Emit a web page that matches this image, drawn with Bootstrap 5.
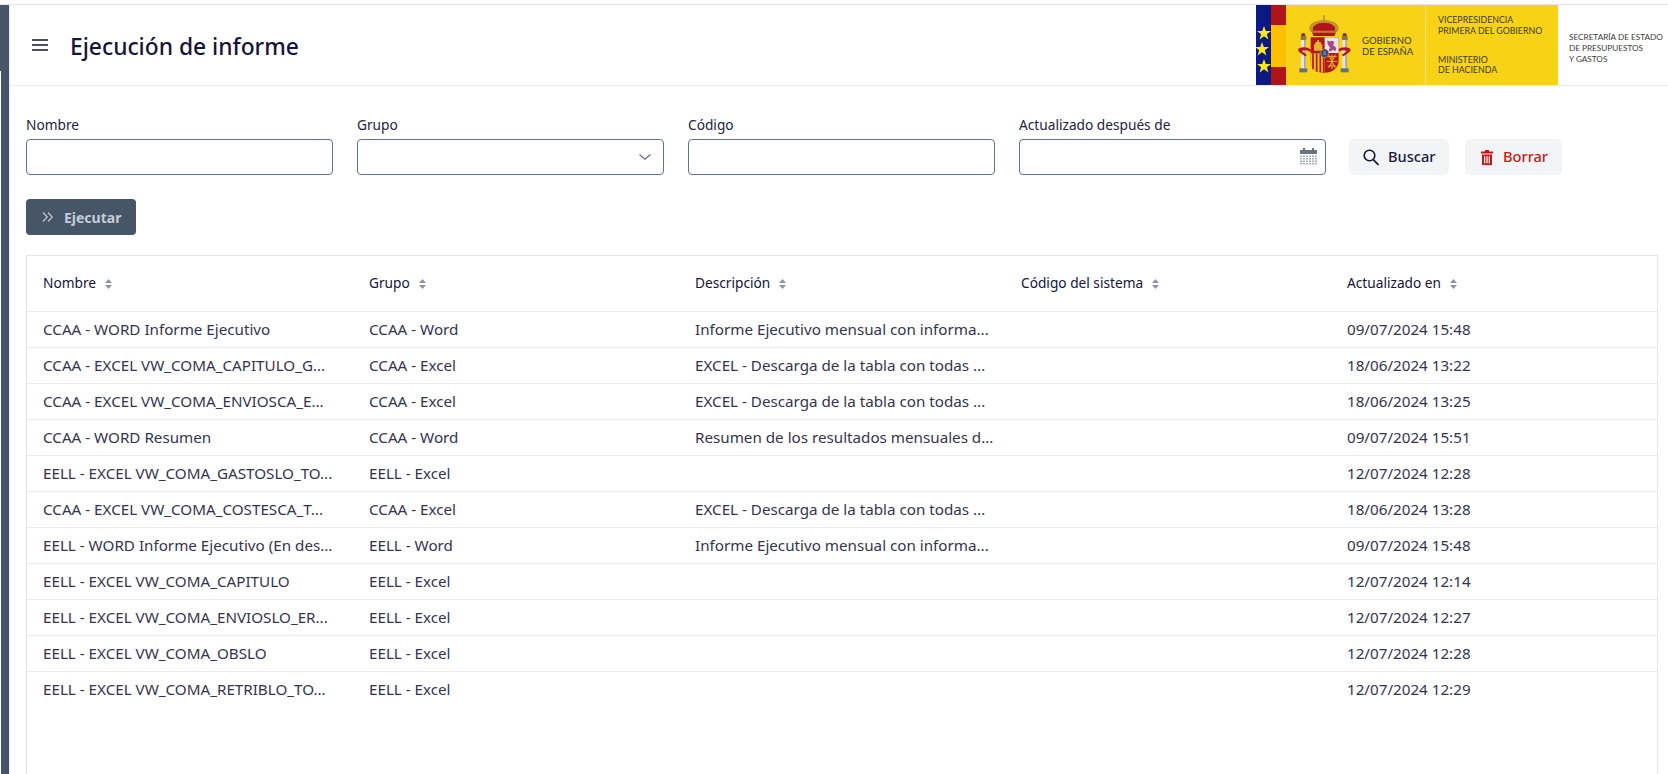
<!doctype html>
<html lang="es"><head>
<meta charset="utf-8"/><meta name="viewport" content="width=device-width,initial-scale=1"/>
<title>Ejecución de informe</title>
<link href="https://cdn.jsdelivr.net/npm/bootstrap@5.3.2/dist/css/bootstrap.min.css" rel="stylesheet">
<style>
html,body{height:100%;overflow:hidden}
body{font-family:"Noto Sans","Open Sans",sans-serif;font-size:14px;color:#1a1a3e;padding-top:4px;background:#fff}
.app-shell{height:770px;border-top:1px solid #e5e7eb}
.rail{width:10px;flex:none;border-right:1px solid #e2e8f0;background:linear-gradient(#475569,#475569) top/100% 66px no-repeat,linear-gradient(90deg,#fff 1px,#475569 1px)}
.page-head{height:81px;border-bottom:1px solid #e8e9ec;padding-left:22px}
.menu-btn{width:16px;height:12px;color:#14143c}
.page-title{font-size:22.8px;font-weight:500;margin:4px 0 0 22px;color:#14143c;line-height:1}
.logo-svg{width:412px;height:80px;flex:none;display:block;margin-bottom:0}
.logo-svg text{font-family:Lato,"Open Sans",sans-serif}
.work{padding:0 10px 0 16px;min-height:0}
.filters{padding-top:29px;gap:24px}
.field{width:307px;flex:none}
.field label{display:block;font-size:13.700px;line-height:19px;margin-bottom:5px;color:#22223f}
.form-control.box-input,.form-select.box-input{height:36px;border:1px solid #64748b;border-radius:4px;box-shadow:none;font-size:14px;padding:0 10px}
.form-select.box-input{background-image:url("data:image/svg+xml,%3csvg xmlns='http://www.w3.org/2000/svg' viewBox='0 0 12 6'%3e%3cpath fill='none' stroke='%2364748b' stroke-width='1.2' d='M.5.5 6 5.3 11.5.5'/%3e%3c/svg%3e");background-size:12px 6px;background-position:right 12px center}
.cal-icon{position:absolute;right:9px;top:9px;width:17px;height:18px}
.act-btn{height:36px;border:0;border-radius:5px;background:#f3f4f6;font-weight:500;font-size:14.600px;display:inline-flex;align-items:center;padding:0;color:#1a1a3e}
.act-btn:hover{background:#e9eaee}
.btn-find{width:100px;padding-left:14px;gap:9px;margin-left:-1px}
.btn-clear{width:97px;padding-left:16px;gap:10px;color:#cc1414;margin-left:-8px}
.btn-clear:hover{color:#cc1414}
.btn-run{width:110px;height:36px;margin-top:24px;background:#475569;border:0;border-radius:4px;color:#c6ccd5;font-weight:700;font-size:14px;padding:0 0 0 16px;gap:11px;opacity:1}
.btn-run:disabled{background:#475569;color:#c6ccd5;opacity:1}
.grid-box{margin-top:20px;border:1px solid #e2e4e8;border-bottom:0;flex:1 1 auto;min-height:0;overflow:hidden}
.report-table{table-layout:fixed;width:1630px;margin:0;color:#34344f;font-size:15.200px}
.report-table>:not(caption)>*>*{padding:0 0 0 16px;border-bottom:1px solid #e8e9ec;box-shadow:none;background:transparent;color:inherit;white-space:nowrap;overflow:hidden;vertical-align:middle}
.report-table thead th{height:55px;font-weight:400;font-size:13.700px;color:#14143c}
.report-table tbody td{height:36px;padding-top:1px}
.report-table tbody tr:last-child td{border-bottom:0}
.sort-mark{width:7px;height:10px;margin-left:9px;vertical-align:-1px}
</style>
</head><body>
<div class="app-shell d-flex">
  <aside class="rail"></aside>
  <div class="flex-grow-1 d-flex flex-column" style="min-width:0">
    <header class="page-head d-flex align-items-center justify-content-between">
      <div class="d-flex align-items-center">
        <svg class="menu-btn" viewBox="0 0 16 12" aria-hidden="true"><path d="M0 1h16M0 6h16M0 11h16" stroke="currentColor" stroke-width="1.6"/></svg>
        <h1 class="page-title">Ejecución de informe</h1>
      </div>
      <svg class="logo-svg" viewBox="0 0 412 80" aria-label="Gobierno de España">
        <rect width="302" height="80" fill="#f8d216"/>
        <rect width="15" height="80" fill="#0b1a80"/>
        <rect x="15" width="15" height="80" fill="#ad1519"/>
        <rect x="15" y="20" width="15" height="42" fill="#fdc000"/>
        <rect x="169" width="1" height="80" fill="#fbe36a"/>
        <g fill="#ffe81a">
          <polygon points="8,21 9.8,26 15,26 10.8,29.2 12.4,34.4 8,31.2 3.6,34.4 5.2,29.2 1,26 6.2,26"/>
          <polygon points="6,37 7.8,42 13,42 8.8,45.2 10.4,50.4 6,47.2 1.6,50.4 3.2,45.2 -1,42 4.2,42"/>
          <polygon points="8,54 9.8,59 15,59 10.8,62.2 12.4,67.4 8,64.2 3.6,67.4 5.2,62.2 1,59 6.2,59"/>
        </g>
        <g transform="translate(34,5) scale(.3333)">
          <!-- columns -->
          <rect x="33" y="90" width="14" height="85" fill="#e8e4da"/><rect x="42" y="90" width="5" height="85" fill="#a9a69c"/>
          <rect x="157" y="90" width="14" height="85" fill="#e8e4da"/><rect x="166" y="90" width="5" height="85" fill="#a9a69c"/>
          <rect x="32" y="78" width="17" height="12" fill="#8a7a3c"/><rect x="156" y="78" width="17" height="12" fill="#8a7a3c"/>
          <path d="M34 78c-3-12 15-12 12 0zM158 78c-3-12 15-12 12 0z" fill="#8c2a22"/>
          <rect x="28" y="175" width="24" height="12" fill="#5f7380"/><rect x="152" y="175" width="24" height="12" fill="#5f7380"/>
          <!-- ribbons -->
          <path d="M25 116c12-6 26-6 37 2v8c-10-6-20-6-27-3l16 12-6 4-20-15z" fill="#b3161c"/>
          <path d="M181 116c-12-6-26-6-37 2v8c10-6 20-6 27-3l-16 12 6 4 20-15z" fill="#b3161c"/>
          <!-- crown -->
          <rect x="100" y="16" width="4" height="20" fill="#a8862c"/>
          <path d="M62 66C46 42 80 30 102 30s56 12 40 36z" fill="#c2932a"/>
          <path d="M70 62c-8-14 14-24 32-24s40 10 32 24z" fill="#b0141c"/>
          <path d="M66 64h72l-4 14H70z" fill="#a9151c"/>
          <path d="M68 66h68" stroke="#e7b93a" stroke-width="3"/>
          <!-- shield -->
          <path d="M62 82h84v70c0 22-20 36-42 36s-42-14-42-36z" fill="#b3161c"/>
          <path d="M104 82h42v47h-42z" fill="#e9e4e6"/>
          <path d="M62 130h42v58c-22 0-42-14-42-36z" fill="#f0c419"/>
          <path d="M69 130v48M80 130v55M91 130v57M101 130v58" stroke="#b3161c" stroke-width="5"/>
          <path d="M72 122V102l4 2v-8h6v-6h5v6h6v8l4-2v20z" fill="#e6b52a"/>
          <path d="M111 92l10 2 8-2 4 6-4 6 10 10-3 10-8-5-7 6-5-4 4-8-6-9z" fill="#a8488a"/>
          <path d="M112 140h28M110 154h32M113 168h26M126 134v44M116 134l20 40M136 134l-20 40" stroke="#e3b32c" stroke-width="3"/>
          <ellipse cx="104" cy="130" rx="12" ry="13" fill="#26459c" stroke="#d9a928" stroke-width="2"/>
          <path d="M100 126h8M98 132h12" stroke="#e3b32c" stroke-width="2.5"/>
        </g>
        <g fill="#3a3a2a" font-size="9.5">
          <text x="106" y="39">GOBIERNO</text>
          <text x="106" y="50">DE ESPAÑA</text>
        </g>
        <g fill="#3a3a2a" font-size="8.8">
          <text x="182" y="18">VICEPRESIDENCIA</text>
          <text x="182" y="29">PRIMERA DEL GOBIERNO</text>
          <text x="182" y="58">MINISTERIO</text>
          <text x="182" y="68">DE HACIENDA</text>
        </g>
        <g fill="#3c3c3c" font-size="8.2">
          <text x="313" y="35">SECRETARÍA DE ESTADO</text>
          <text x="313" y="46">DE PRESUPUESTOS</text>
          <text x="313" y="57">Y GASTOS</text>
        </g>
      </svg>
    </header>
    <main class="work d-flex flex-column flex-grow-1">
      <form class="filters d-flex align-items-end" onsubmit="return false;">
        <div class="field"><label for="fNombre">Nombre</label><input id="fNombre" class="form-control box-input"></div>
        <div class="field"><label for="fGrupo">Grupo</label><select id="fGrupo" class="form-select box-input"><option></option></select></div>
        <div class="field"><label for="fCodigo">Código</label><input id="fCodigo" class="form-control box-input"></div>
        <div class="field"><label for="fFecha">Actualizado después de</label>
          <div class="position-relative"><input id="fFecha" class="form-control box-input">
            <svg class="cal-icon" viewBox="0 0 17 18" aria-hidden="true">
              <rect x="0" y="2" width="17" height="4" fill="#6b7280"/><rect x="3" y="0" width="2" height="3" fill="#6b7280"/><rect x="12" y="0" width="2" height="3" fill="#6b7280"/>
              <path d="M1 7.5v10M4 7.500v10M7 7.500v10M10 7.500v10M13 7.500v10M16 7.500v10" stroke="#8b929c" stroke-width="1.500" stroke-dasharray="1.500 1"/>
            </svg>
          </div>
        </div>
        <button type="button" class="btn act-btn btn-find">
          <svg width="16" height="17" viewBox="0 0 16 17" aria-hidden="true"><circle cx="6.500" cy="6.500" r="5.300" fill="none" stroke="#14143c" stroke-width="1.600"/><path d="M10.500 10.800 15.500 16" stroke="#14143c" stroke-width="1.800"/></svg>
          Buscar</button>
        <button type="button" class="btn act-btn btn-clear">
          <svg width="12" height="15" viewBox="0 0 12 15" aria-hidden="true"><path fill="#cc1414" d="M4 0h4v1.500h4V3.500H0V1.500h4zM1 4.500h10V15H1zM3 6.200v7h1.300v-7zM5.400 6.200v7h1.300v-7zM7.700 6.200v7H9v-7z" fill-rule="evenodd"/></svg>
          Borrar</button>
      </form>
      <div><button type="button" class="btn btn-run d-inline-flex align-items-center" disabled>
        <svg width="11" height="10" viewBox="0 0 11 10" aria-hidden="true"><path d="M1 .5 5.300 5 1 9.500M6 .5 10.300 5 6 9.500" fill="none" stroke="#c6ccd5" stroke-width="1.100"/></svg>
        Ejecutar</button></div>
      <div class="grid-box">
        <table class="table report-table">
          <thead id="thead"></thead>
          <tbody id="tbody"></tbody>
        </table>
      </div>
    </main>
  </div>
</div>
<script src="https://cdn.jsdelivr.net/npm/bootstrap@5.3.2/dist/js/bootstrap.bundle.min.js"></script>
<script>
const cols = ['Nombre','Grupo','Descripción','Código del sistema','Actualizado en'];
const rows = [
  ['CCAA - WORD Informe Ejecutivo','CCAA - Word','Informe Ejecutivo mensual con informa...','','09/07/2024 15:48'],
  ['CCAA - EXCEL VW_COMA_CAPITULO_G...','CCAA - Excel','EXCEL - Descarga de la tabla con todas ...','','18/06/2024 13:22'],
  ['CCAA - EXCEL VW_COMA_ENVIOSCA_E...','CCAA - Excel','EXCEL - Descarga de la tabla con todas ...','','18/06/2024 13:25'],
  ['CCAA - WORD Resumen','CCAA - Word','Resumen de los resultados mensuales d...','','09/07/2024 15:51'],
  ['EELL - EXCEL VW_COMA_GASTOSLO_TO...','EELL - Excel','','','12/07/2024 12:28'],
  ['CCAA - EXCEL VW_COMA_COSTESCA_T...','CCAA - Excel','EXCEL - Descarga de la tabla con todas ...','','18/06/2024 13:28'],
  ['EELL - WORD Informe Ejecutivo (En des...','EELL - Word','Informe Ejecutivo mensual con informa...','','09/07/2024 15:48'],
  ['EELL - EXCEL VW_COMA_CAPITULO','EELL - Excel','','','12/07/2024 12:14'],
  ['EELL - EXCEL VW_COMA_ENVIOSLO_ER...','EELL - Excel','','','12/07/2024 12:27'],
  ['EELL - EXCEL VW_COMA_OBSLO','EELL - Excel','','','12/07/2024 12:28'],
  ['EELL - EXCEL VW_COMA_RETRIBLO_TO...','EELL - Excel','','','12/07/2024 12:29']
];
const sortIcon = '<svg class="sort-mark" viewBox="0 0 7 10" aria-hidden="true"><path d="M3.500 0 7 4H0zM3.500 10 0 6h7z" fill="#8a94a6"/></svg>';
document.getElementById('thead').innerHTML = '<tr>' + cols.map(c => '<th>' + c + sortIcon + '</th>').join('') + '</tr>';
document.getElementById('tbody').innerHTML = rows.map(r => '<tr>' + r.map(c => '<td>' + c + '</td>').join('') + '</tr>').join('');
</script>
</body></html>
